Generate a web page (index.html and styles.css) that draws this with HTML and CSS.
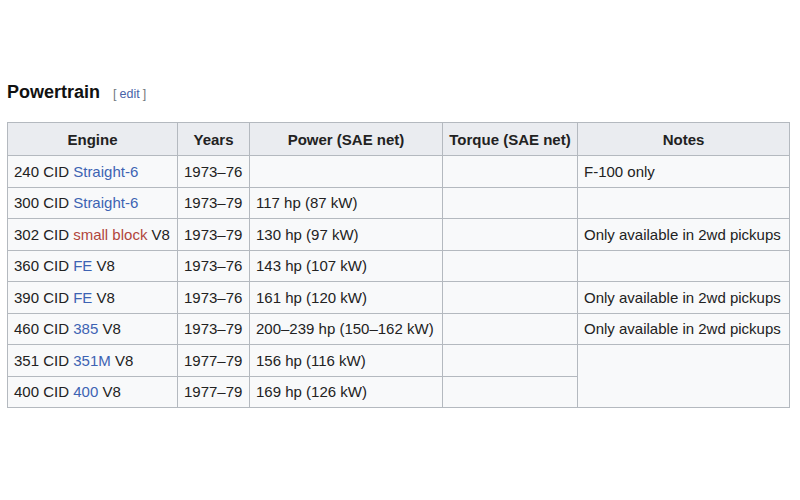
FILE: index.html
```html
<!DOCTYPE html>
<html>
<head>
<meta charset="utf-8">
<link rel="stylesheet" href="styles.css">
</head>
<body>
<div class="page">
  <h2 class="heading"><span class="title">Powertrain</span><span class="edit">[<a class="editlink">edit</a>]</span></h2>
  <table class="wikitable">
    <colgroup>
      <col class="c1"><col class="c2"><col class="c3"><col class="c4"><col class="c5">
    </colgroup>
    <thead>
      <tr><th>Engine</th><th>Years</th><th>Power (SAE net)</th><th>Torque (SAE net)</th><th>Notes</th></tr>
    </thead>
    <tbody>
      <tr><td>240 CID <a class="link">Straight-6</a></td><td>1973–76</td><td></td><td></td><td>F-100 only</td></tr>
      <tr><td>300 CID <a class="link">Straight-6</a></td><td>1973–79</td><td>117 hp (87 kW)</td><td></td><td></td></tr>
      <tr><td>302 CID <a class="link red">small block</a> V8</td><td>1973–79</td><td>130 hp (97 kW)</td><td></td><td>Only available in 2wd pickups</td></tr>
      <tr><td>360 CID <a class="link">FE</a> V8</td><td>1973–76</td><td>143 hp (107 kW)</td><td></td><td></td></tr>
      <tr><td>390 CID <a class="link">FE</a> V8</td><td>1973–76</td><td>161 hp (120 kW)</td><td></td><td>Only available in 2wd pickups</td></tr>
      <tr><td>460 CID <a class="link">385</a> V8</td><td>1973–79</td><td>200–239 hp (150–162 kW)</td><td></td><td>Only available in 2wd pickups</td></tr>
      <tr><td>351 CID <a class="link">351M</a> V8</td><td>1977–79</td><td>156 hp (116 kW)</td><td></td><td rowspan="2"></td></tr>
      <tr><td>400 CID <a class="link">400</a> V8</td><td>1977–79</td><td>169 hp (126 kW)</td><td></td></tr>
    </tbody>
  </table>
</div>
</body>
</html>
```
FILE: styles.css
```css
html, body {
  margin: 0;
  padding: 0;
  background: #ffffff;
}
.page {
  padding: 81px 0 0 7px;
  font-family: "Liberation Sans", Arial, sans-serif;
  color: #222222;
}
.heading {
  margin: 0 0 18px 0;
  height: 23px;
  line-height: 23px;
  display: flex;
  align-items: baseline;
}
.title {
  font-size: 18px;
  font-weight: bold;
  color: #111;
}
.edit {
  font-size: 12.5px;
  font-weight: normal;
  color: #72777d;
  margin-left: 13px;
}
.editlink {
  color: #4a63a8;
  margin: 0 3px;
}
.wikitable {
  border-collapse: collapse;
  table-layout: fixed;
  width: 782px;
  background: #f8f9fa;
  border: 1px solid #a2a9b1;
  font-size: 15px;
}
.c1 { width: 170px; }
.c2 { width: 72px; }
.c3 { width: 193px; }
.c4 { width: 135px; }
.c5 { width: 212px; }
.wikitable th,
.wikitable td {
  border: 1px solid #b4b9bf;
  padding: 0 6px;
  height: 30.5px;
  text-align: left;
  white-space: nowrap;
}
.wikitable th {
  background: #eaecf0;
  text-align: center;
  font-weight: bold;
  height: 32px;
  color: #222;
}
.link {
  color: #3d63b3;
}
.link.red {
  color: #b1463c;
}
```
